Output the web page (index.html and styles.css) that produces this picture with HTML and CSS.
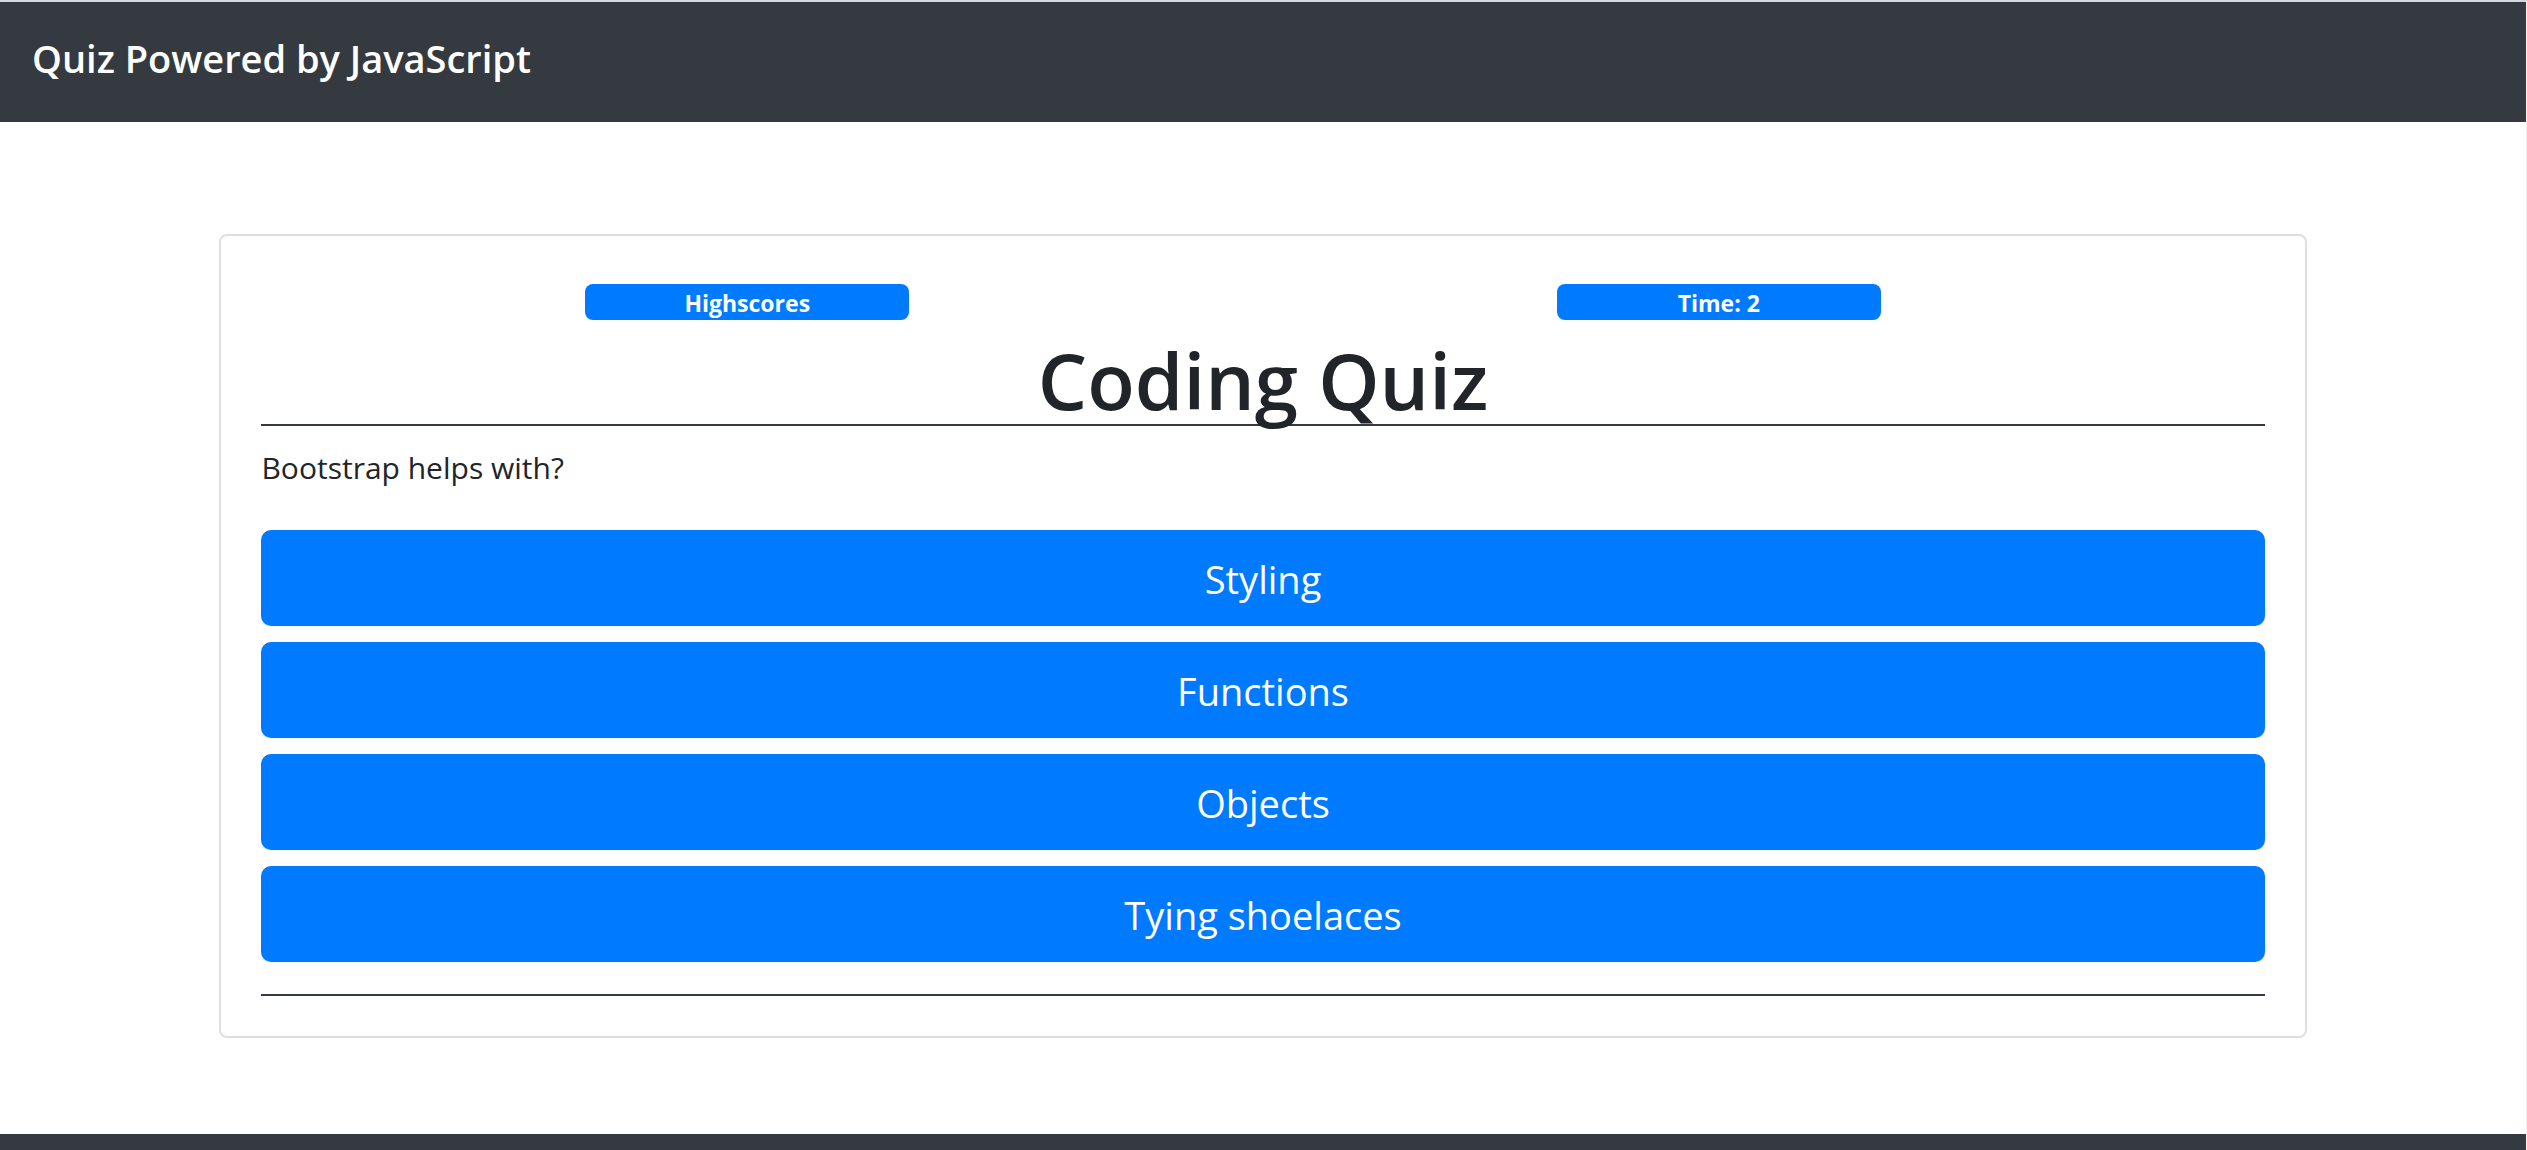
FILE: index.html
```html
<!DOCTYPE html>
<html lang="en">
<head>
  <meta charset="utf-8">
  <meta name="viewport" content="width=device-width, initial-scale=1">
  <title>Coding Quiz</title>
  <link rel="stylesheet" href="styles.css">
</head>
<body>
  <header class="navbar">
    <span class="navbar-title">Quiz Powered by JavaScript</span>
  </header>
  <main class="main">
    <section class="card">
      <div class="status">
        <button type="button" class="badge badge-scores">Highscores</button>
        <div class="badge badge-time">Time: 2</div>
      </div>
      <h1 class="title">Coding Quiz</h1>
      <hr class="rule">
      <p class="question">Bootstrap helps with?</p>
      <div class="answers">
        <button type="button" class="answer">Styling</button>
        <button type="button" class="answer">Functions</button>
        <button type="button" class="answer">Objects</button>
        <button type="button" class="answer">Tying shoelaces</button>
      </div>
      <hr class="rule">
    </section>
  </main>
  <footer class="footer"></footer>
</body>
</html>
```
FILE: styles.css
```css
* {
  box-sizing: border-box;
}

body {
  display: flex;
  flex-direction: column;
  min-height: 100vh;
  margin: 0;
  border-top: 2px solid #d5d9de;
  border-right: 1px solid #f0f0f0;
  background: #fff;
  color: #212529;
  font-family: "Segoe UI", "Open Sans", "Noto Sans", sans-serif;
}

.navbar {
  padding: 28px 32px 36px;
  background: #343a40;
  color: #fff;
}

.navbar-title {
  display: block;
  font-size: 38px;
  font-weight: 600;
  line-height: 56px;
}

.main {
  flex: 1;
  padding: 112px calc(100% / 12 + 9px) 96px;
}

.card {
  padding: 48px 40px 40px;
  border: 2px solid #dfdfdf;
  border-radius: 8px;
}

.status {
  display: grid;
  grid-template-columns: repeat(6, 1fr);
  padding-right: 60px;
}

.badge {
  height: 36px;
  padding: 2px 0 0;
  border: 0;
  border-radius: 8px;
  background: #007bff;
  color: #fff;
  font-family: inherit;
  font-size: 23px;
  font-weight: 700;
  line-height: 34px;
  text-align: center;
}

.badge-scores {
  grid-column: 2;
}

.badge-time {
  grid-column: 5;
}

.title {
  margin: 16px 0 0;
  font-size: 78px;
  font-weight: 600;
  line-height: 88px;
  text-align: center;
}

.rule {
  height: 2px;
  margin: 0;
  border: 0;
  background: #343a40;
}

.question {
  margin: 18px 0 38px;
  font-size: 30px;
  line-height: 48px;
}

.answers {
  display: grid;
  gap: 16px;
  margin-bottom: 32px;
}

.answer {
  height: 96px;
  padding: 2px 0 0;
  border: 0;
  border-radius: 10px;
  background: #007bff;
  color: #fff;
  font-family: inherit;
  font-size: 38px;
  line-height: 60px;
}

.footer {
  height: 16px;
  background: #343a40;
}
```
